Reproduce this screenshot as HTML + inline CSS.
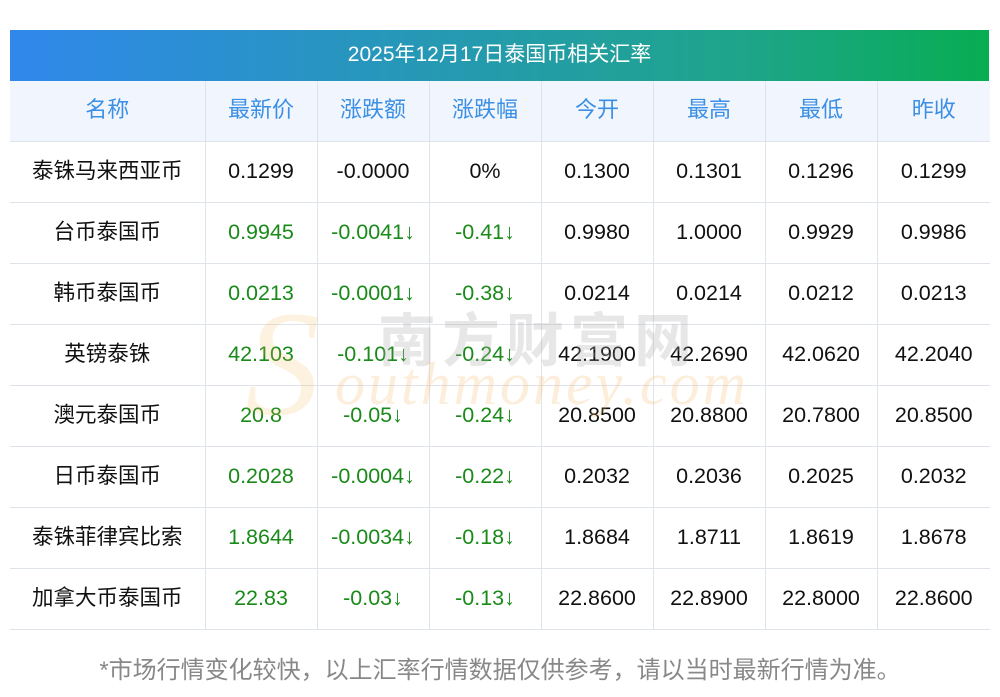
<!DOCTYPE html>
<html><head><meta charset="utf-8"><style>
body{margin:0;background:#fff;width:1000px;height:697px;position:relative;overflow:hidden;font-family:"Liberation Sans","Noto Sans CJK SC",sans-serif}
.title{position:absolute;left:10px;top:30px;width:979px;height:51px;background:linear-gradient(90deg,#3088ec,#1ea58a 75%,#07ad52);color:#fff;font-size:21px;line-height:49px;text-align:center}
table{position:absolute;left:10px;top:81px;border-collapse:collapse;width:980px;table-layout:fixed}
td{border:1px solid #dfe3ea;height:57px;text-align:center;font-size:21.5px;line-height:22px;color:#111;padding:0 0 3px 0}
tr.h td{background:#f1f6fe;color:#3b8fe4;font-size:22px}
tr td:first-child{border-left:none}tr td:last-child{border-right:none}
tr.h td{border-top:none}
.g{color:#1a8a1a}
.foot{position:absolute;top:650px;left:0;width:1000px;text-align:center;color:#888;font-size:24px}
.wm1{position:absolute;left:378px;top:294px;font-size:58px;color:#aaa;opacity:.28;letter-spacing:6px;font-weight:bold}
.wm2{position:absolute;left:335px;top:350px;font-size:60px;color:#f5b35a;opacity:.22;font-style:italic;font-family:"Liberation Serif",serif;letter-spacing:3px}
.wm3{position:absolute;left:245px;top:278px;font-size:150px;color:#f5b35a;opacity:.18;font-style:italic;font-family:"Liberation Serif",serif}
</style></head><body>
<div class="title">2025年12月17日泰国币相关汇率</div>
<table>
<colgroup><col style="width:195px"><col style="width:112px"><col style="width:112px"><col style="width:112px"><col style="width:112px"><col style="width:112px"><col style="width:112px"><col style="width:113px"></colgroup>
<tr class="h"><td>名称</td><td>最新价</td><td>涨跌额</td><td>涨跌幅</td><td>今开</td><td>最高</td><td>最低</td><td>昨收</td></tr>
<tr><td>泰铢马来西亚币</td><td>0.1299</td><td>-0.0000</td><td>0%</td><td>0.1300</td><td>0.1301</td><td>0.1296</td><td>0.1299</td></tr>
<tr><td>台币泰国币</td><td class="g">0.9945</td><td class="g">-0.0041↓</td><td class="g">-0.41↓</td><td>0.9980</td><td>1.0000</td><td>0.9929</td><td>0.9986</td></tr>
<tr><td>韩币泰国币</td><td class="g">0.0213</td><td class="g">-0.0001↓</td><td class="g">-0.38↓</td><td>0.0214</td><td>0.0214</td><td>0.0212</td><td>0.0213</td></tr>
<tr><td>英镑泰铢</td><td class="g">42.103</td><td class="g">-0.101↓</td><td class="g">-0.24↓</td><td>42.1900</td><td>42.2690</td><td>42.0620</td><td>42.2040</td></tr>
<tr><td>澳元泰国币</td><td class="g">20.8</td><td class="g">-0.05↓</td><td class="g">-0.24↓</td><td>20.8500</td><td>20.8800</td><td>20.7800</td><td>20.8500</td></tr>
<tr><td>日币泰国币</td><td class="g">0.2028</td><td class="g">-0.0004↓</td><td class="g">-0.22↓</td><td>0.2032</td><td>0.2036</td><td>0.2025</td><td>0.2032</td></tr>
<tr><td>泰铢菲律宾比索</td><td class="g">1.8644</td><td class="g">-0.0034↓</td><td class="g">-0.18↓</td><td>1.8684</td><td>1.8711</td><td>1.8619</td><td>1.8678</td></tr>
<tr><td>加拿大币泰国币</td><td class="g">22.83</td><td class="g">-0.03↓</td><td class="g">-0.13↓</td><td>22.8600</td><td>22.8900</td><td>22.8000</td><td>22.8600</td></tr>
</table>
<div class="wm3">S</div>
<div class="wm1">南方财富网</div>
<div class="wm2">outhmoney.com</div>
<div class="foot">*市场行情变化较快，以上汇率行情数据仅供参考，请以当时最新行情为准。</div>
</body></html>
